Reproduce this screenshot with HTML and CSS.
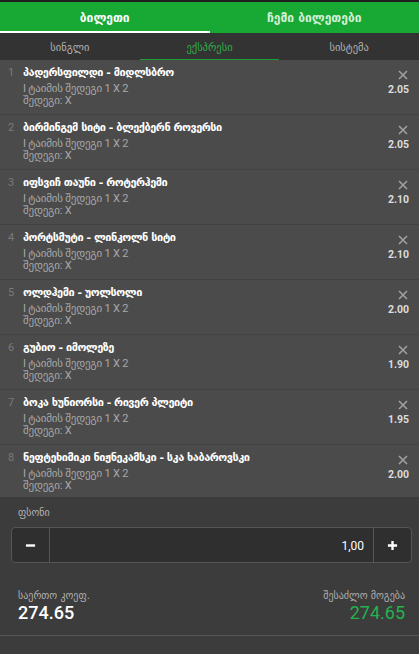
FILE: index.html
```html
<!DOCTYPE html>
<html lang="ka">
<head>
<meta charset="utf-8">
<title>ბილეთი</title>
<link rel="stylesheet" href="styles.css">
</head>
<body>
<div class="app">
  <div class="topbar">
    <div class="tab active">ბილეთი</div>
    <div class="tab">ჩემი ბილეთები</div>
  </div>
  <div class="subtabs">
    <div class="subtab">სინგლი</div>
    <div class="subtab active">ექსპრესი</div>
    <div class="subtab">სისტემა</div>
  </div>
  <div class="list">
    <div class="item">
      <div class="num">1</div>
      <div class="info">
        <div class="title">პადერსფილდი - მიდლსბრო</div>
        <div class="sub first">I ტაიმის შედეგი 1 X 2</div>
        <div class="sub">შედეგი: X</div>
      </div>
      <div class="side">
        <svg class="close" viewBox="0 0 10 10"><path d="M1 1L9 9M9 1L1 9"/></svg>
        <div class="odds">2.05</div>
      </div>
    </div>
    <div class="item">
      <div class="num">2</div>
      <div class="info">
        <div class="title">ბირმინგემ სიტი - ბლექბერნ როვერსი</div>
        <div class="sub first">I ტაიმის შედეგი 1 X 2</div>
        <div class="sub">შედეგი: X</div>
      </div>
      <div class="side">
        <svg class="close" viewBox="0 0 10 10"><path d="M1 1L9 9M9 1L1 9"/></svg>
        <div class="odds">2.05</div>
      </div>
    </div>
    <div class="item">
      <div class="num">3</div>
      <div class="info">
        <div class="title">იფსვიჩ თაუნი - როტერჰემი</div>
        <div class="sub first">I ტაიმის შედეგი 1 X 2</div>
        <div class="sub">შედეგი: X</div>
      </div>
      <div class="side">
        <svg class="close" viewBox="0 0 10 10"><path d="M1 1L9 9M9 1L1 9"/></svg>
        <div class="odds">2.10</div>
      </div>
    </div>
    <div class="item">
      <div class="num">4</div>
      <div class="info">
        <div class="title">პორტსმუტი - ლინკოლნ სიტი</div>
        <div class="sub first">I ტაიმის შედეგი 1 X 2</div>
        <div class="sub">შედეგი: X</div>
      </div>
      <div class="side">
        <svg class="close" viewBox="0 0 10 10"><path d="M1 1L9 9M9 1L1 9"/></svg>
        <div class="odds">2.10</div>
      </div>
    </div>
    <div class="item">
      <div class="num">5</div>
      <div class="info">
        <div class="title">ოლდჰემი - უოლსოლი</div>
        <div class="sub first">I ტაიმის შედეგი 1 X 2</div>
        <div class="sub">შედეგი: X</div>
      </div>
      <div class="side">
        <svg class="close" viewBox="0 0 10 10"><path d="M1 1L9 9M9 1L1 9"/></svg>
        <div class="odds">2.00</div>
      </div>
    </div>
    <div class="item">
      <div class="num">6</div>
      <div class="info">
        <div class="title">გუბიო - იმოლეზე</div>
        <div class="sub first">I ტაიმის შედეგი 1 X 2</div>
        <div class="sub">შედეგი: X</div>
      </div>
      <div class="side">
        <svg class="close" viewBox="0 0 10 10"><path d="M1 1L9 9M9 1L1 9"/></svg>
        <div class="odds">1.90</div>
      </div>
    </div>
    <div class="item">
      <div class="num">7</div>
      <div class="info">
        <div class="title">ბოკა ხუნიორსი - რივერ პლეიტი</div>
        <div class="sub first">I ტაიმის შედეგი 1 X 2</div>
        <div class="sub">შედეგი: X</div>
      </div>
      <div class="side">
        <svg class="close" viewBox="0 0 10 10"><path d="M1 1L9 9M9 1L1 9"/></svg>
        <div class="odds">1.95</div>
      </div>
    </div>
    <div class="item last">
      <div class="num">8</div>
      <div class="info">
        <div class="title">ნეფტეხიმიკი ნიჟნეკამსკი - სკა ხაბაროვსკი</div>
        <div class="sub first">I ტაიმის შედეგი 1 X 2</div>
        <div class="sub">შედეგი: X</div>
      </div>
      <div class="side">
        <svg class="close" viewBox="0 0 10 10"><path d="M1 1L9 9M9 1L1 9"/></svg>
        <div class="odds">2.00</div>
      </div>
    </div>
  </div>
  <div class="stake">
    <div class="stake-label">ფსონი</div>
    <div class="stake-input">
      <div class="btn"><svg viewBox="0 0 12 12"><path d="M1 6H11"/></svg></div>
      <div class="value">1,00</div>
      <div class="btn"><svg viewBox="0 0 12 12"><path d="M1 6H11M6 1V11"/></svg></div>
    </div>
  </div>
  <div class="totals">
    <div class="total">
      <div class="total-label">საერთო კოეფ.</div>
      <div class="total-value">274.65</div>
    </div>
    <div class="total right">
      <div class="total-label">შესაძლო მოგება</div>
      <div class="total-value green">274.65</div>
    </div>
  </div>
</div>
</body>
</html>
```

FILE: styles.css
```css
* { box-sizing: border-box; }
html, body { margin: 0; padding: 0; }
body {
  background: #3c3c3c;
  font-family: Roboto, "DejaVu Sans", sans-serif;
  color: #fff;
}
.app { width: 419px; min-height: 654px; background: #3c3c3c; }

.topbar {
  display: flex;
  background: #18a935;
  border-top: 2px solid #1f1f1f;
  height: 33px;
}
.tab {
  flex: 1;
  display: flex;
  align-items: center;
  justify-content: center;
  font-family: "DejaVu Sans", sans-serif;
  font-size: 12px;
  font-weight: bold;
  color: #d6f0d9;
  border-bottom: 2px solid transparent;
  padding-top: 2px;
}
.tab.active { color: #fff; border-bottom-color: #fff; }

.subtabs {
  display: flex;
  background: #333333;
  height: 27px;
}
.subtab {
  flex: 1;
  display: flex;
  align-items: center;
  justify-content: center;
  font-family: "DejaVu Sans", sans-serif;
  font-size: 10.5px;
  color: #b4b4b4;
  border-bottom: 1px solid transparent;
  padding-top: 1px;
}
.subtab.active { color: #2fb044; border-bottom-color: #1f9c35; }

.list { background: #4b4b4b; }
.item {
  display: flex;
  padding: 5px 10px 7px 0;
  border-bottom: 1px solid #424242;
}
.item.last { border-bottom: none; padding-bottom: 5px; }
.num {
  width: 23px;
  padding-left: 8px;
  font-size: 11px;
  line-height: 16px;
  color: #7a7a7a;
}
.info { flex: 1; min-width: 0; }
.title {
  font-family: "DejaVu Sans", sans-serif;
  font-size: 11px;
  font-weight: bold;
  line-height: 16px;
  letter-spacing: -0.5px;
  color: #fff;
  white-space: nowrap;
}
.sub {
  font-family: Roboto, "DejaVu Sans", sans-serif;
  font-size: 11px;
  line-height: 12px;
  letter-spacing: -0.2px;
  color: #a8a8a8;
}
.sub.first { margin-top: 2px; }
.side {
  display: flex;
  flex-direction: column;
  align-items: flex-end;
  padding-top: 5px;
}
.close {
  width: 10px;
  height: 10px;
  margin-right: 1px;
  stroke: #a0a0a0;
  stroke-width: 1.6;
  fill: none;
}
.odds {
  margin-top: 3px;
  font-size: 10.5px;
  font-weight: bold;
  color: #dcdcdc;
  line-height: 13px;
}

.stake {
  padding: 9px 7px 0 11px;
}
.stake-label {
  font-family: "DejaVu Sans", sans-serif;
  font-size: 10px;
  color: #b0b0b0;
  padding-left: 7px;
  line-height: 14px;
}
.stake-input {
  display: flex;
  margin-top: 7px;
  height: 36px;
  border: 1px solid #555;
  border-radius: 4px;
  background: #2f2f2f;
}
.btn {
  width: 38px;
  display: flex;
  align-items: center;
  justify-content: center;
}
.btn:first-child { border-right: 1px solid #555; }
.btn:last-child { border-left: 1px solid #555; }
.btn svg {
  width: 11px;
  height: 11px;
  stroke: #fff;
  stroke-width: 2.6;
  fill: none;
}
.value {
  flex: 1;
  display: flex;
  align-items: center;
  justify-content: flex-end;
  padding-right: 9px;
  font-size: 12px;
  color: #fff;
  padding-top: 2px;
}

.totals {
  display: flex;
  justify-content: space-between;
  padding: 26px 14px 12px 18px;
  border-bottom: 1px solid #555;
}
.total.right { text-align: right; }
.total-label {
  font-family: "DejaVu Sans", sans-serif;
  font-size: 10px;
  color: #b0b0b0;
  line-height: 14px;
}
.total-value {
  font-size: 18px;
  line-height: 20px;
  color: #fff;
  font-weight: 500;
}
.total-value.green { color: #22b34f; font-weight: 400; }
```
